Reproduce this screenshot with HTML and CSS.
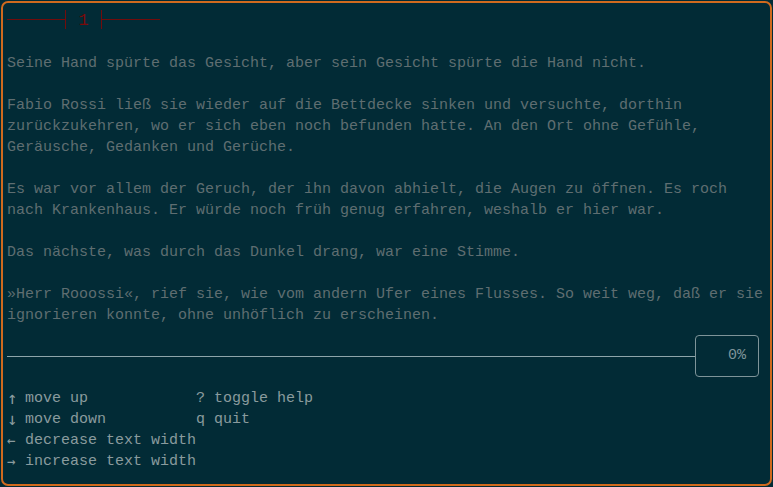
FILE: index.html
```html
<!DOCTYPE html>
<html lang="de">
<head>
<meta charset="utf-8">
<title>Reader</title>
<link rel="stylesheet" href="styles.css">
</head>
<body>
<div class="frame">
  <div class="title">
    <span class="rule rule-left"></span>
    <span class="tick"></span>
    <span class="num">1</span>
    <span class="tick"></span>
    <span class="rule rule-right"></span>
  </div>
  <div class="text">
    <p>Seine Hand spürte das Gesicht, aber sein Gesicht spürte die Hand nicht.</p>
    <p>Fabio Rossi ließ sie wieder auf die Bettdecke sinken und versuchte, dorthin<br>zurückzukehren, wo er sich eben noch befunden hatte. An den Ort ohne Gefühle,<br>Geräusche, Gedanken und Gerüche.</p>
    <p>Es war vor allem der Geruch, der ihn davon abhielt, die Augen zu öffnen. Es roch<br>nach Krankenhaus. Er würde noch früh genug erfahren, weshalb er hier war.</p>
    <p>Das nächste, was durch das Dunkel drang, war eine Stimme.</p>
    <p>»Herr Rooossi«, rief sie, wie vom andern Ufer eines Flusses. So weit weg, daß er sie<br>ignorieren konnte, ohne unhöflich zu erscheinen.</p>
  </div>
  <div class="progress">
    <div class="progress-line"></div>
    <div class="progress-box">0%</div>
  </div>
  <div class="help">
    <span><span class="key key-v">↑</span> move up</span><span>? toggle help</span>
    <span><span class="key key-v">↓</span> move down</span><span>q quit</span>
    <span><span class="key">←</span> decrease text width</span><span></span>
    <span><span class="key">→</span> increase text width</span><span></span>
  </div>
</div>
</body>
</html>
```
FILE: styles.css
```css
html, body {
  margin: 0;
  padding: 0;
  background: #022b36;
}
body {
  width: 773px;
  height: 487px;
  overflow: hidden;
  font-family: "Liberation Mono", "DejaVu Sans Mono", monospace;
  font-size: 15px;
  line-height: 21px;
}
.frame {
  box-sizing: border-box;
  margin: 1px;
  width: 771px;
  height: 485px;
  border: 2px solid #d06a1e;
  border-radius: 7px;
  padding: 6px 4px 0 4px;
}
.title {
  display: flex;
  align-items: center;
  height: 21px;
  color: #7a0a0a;
}
.rule {
  height: 1px;
  background: #720c0c;
  width: 58px;
}
.tick {
  width: 1px;
  height: 19px;
  background: #720c0c;
}
.num {
  width: 35px;
  text-align: center;
  font-size: 17px;
  line-height: 21px;
  padding-top: 2px;
}
.text {
  margin-top: 23px;
  color: #5f6e71;
}
.text p {
  margin: 0 0 21px 0;
  white-space: nowrap;
}
.text p:last-child {
  margin-bottom: 0;
}
.progress {
  display: flex;
  align-items: center;
  margin-top: 9px;
}
.progress-line {
  flex: 0 0 688px;
  height: 1px;
  background: #8ea5aa;
}
.progress-box {
  box-sizing: border-box;
  width: 64px;
  height: 42px;
  border: 1px solid #7e9499;
  border-radius: 4px;
  color: #7e9499;
  text-align: right;
  padding-right: 12px;
  line-height: 40px;
}
.help {
  display: grid;
  grid-template-columns: 189px auto;
  grid-auto-rows: 21px;
  margin-top: 11px;
  color: #8a9b9e;
  white-space: pre;
}
.key {
  display: inline-block;
  width: 9px;
  height: 21px;
  line-height: 21px;
  vertical-align: top;
  font-family: "DejaVu Sans Mono", monospace;
  font-size: 14px;
  text-align: left;
}
.key-v {
  font-size: 17px;
}
```
